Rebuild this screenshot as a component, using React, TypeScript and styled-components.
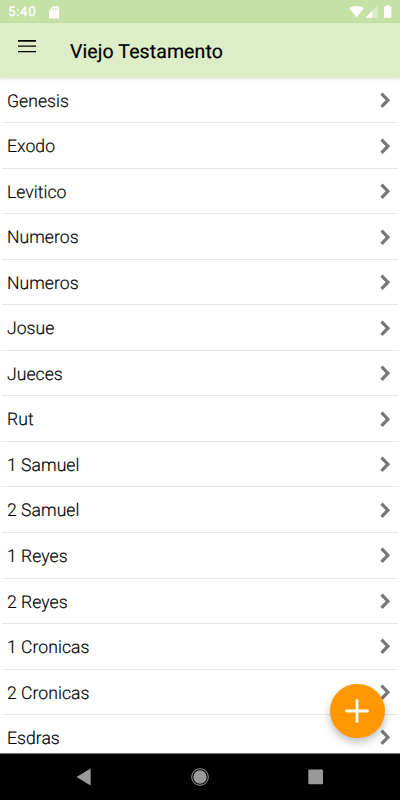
import React from "react";
import styled, { createGlobalStyle } from "styled-components";

const GlobalStyle = createGlobalStyle`
  * { box-sizing: border-box; }
  body {
    margin: 0;
    background: #fff;
    font-family: Roboto, sans-serif;
    text-rendering: geometricPrecision;
  }
`;

const Screen = styled.div`
  position: relative;
  display: flex;
  flex-direction: column;
  width: 400px;
  height: 800px;
  overflow: hidden;
  background: #fff;
`;

const StatusBar = styled.div`
  flex: none;
  display: flex;
  align-items: center;
  height: 23px;
  padding: 1px 7px 0 8px;
  background: #c5e1a5;
  color: #fff;
`;

const Clock = styled.span`
  width: 41px;
  padding-top: 2px;
  font-size: 13.3px;
  font-weight: 400;
  -webkit-text-stroke: 0.3px #fff;
  letter-spacing: 0.7px;
  line-height: 22px;
`;

const StatusIcons = styled.div`
  display: flex;
  align-items: center;
  margin-left: auto;
`;

const AppBar = styled.header`
  flex: none;
  z-index: 1;
  display: flex;
  height: 55px;
  padding-left: 18px;
  background: #dcedc8;
  box-shadow: 0 1px 3px rgba(0, 0, 0, 0.12);
`;

const MenuButton = styled.button`
  width: 52px;
  height: 46px;
  padding: 0;
  border: 0;
  background: none;
  text-align: left;
  svg { display: block; }
`;

const Title = styled.h1`
  margin: 0;
  font-size: 19.5px;
  font-weight: 400;
  -webkit-text-stroke: 0.2px #000;
  letter-spacing: 0.1px;
  line-height: 57px;
  color: #000;
`;

const BookList = styled.ul`
  flex: 1;
  min-height: 0;
  margin: -0.3px 0 0;
  padding: 0 2px;
  overflow: hidden;
  list-style: none;
`;

const BookRow = styled.li`
  display: flex;
  align-items: center;
  justify-content: space-between;
  height: 45.54px;
  padding: 0 7px 0 5px;
  border-bottom: 1px solid #e6e6e6;
  font-size: 17.6px;
  font-weight: 300;
  -webkit-text-stroke: 0.18px #000;
  letter-spacing: 0.03px;
  color: #000;
  svg { display: block; }
`;

const BookName = styled.span`
  padding-top: 3.4px;
`;

const AddButton = styled.button`
  position: absolute;
  left: 330px;
  top: 683.5px;
  display: flex;
  align-items: center;
  justify-content: center;
  width: 54.5px;
  height: 54.5px;
  padding: 0;
  border: 0;
  border-radius: 50%;
  background: #ff9800;
  box-shadow: 0 4px 8px rgba(0, 0, 0, 0.27);
`;

const NavBar = styled.nav`
  flex: none;
  display: flex;
  align-items: center;
  justify-content: space-between;
  height: 47px;
  padding: 0 76px 0 76px;
  border-top: 1px solid #777;
  background: #000;
  svg { display: block; }
`;

const books = [
  "Genesis", "Exodo", "Levitico", "Numeros", "Numeros", "Josue", "Jueces", "Rut",
  "1 Samuel", "2 Samuel", "1 Reyes", "2 Reyes", "1 Cronicas", "2 Cronicas", "Esdras",
];

const Chevron = () => (
  <svg width="12" height="18" viewBox="0 0 12 18" fill="none" stroke="#777" strokeWidth="3.2">
    <path d="M2.500 2.600 8.900 9.200l-6.400 6.600" />
  </svg>
);

export default function App() {
  return (
    <>
      <GlobalStyle />
      <Screen>
        <StatusBar>
          <Clock>5:40</Clock>
          <svg width="11" height="13" viewBox="0 0 11 13">
            <path fill="#fff" fillRule="evenodd" d="M4 .3h5a1.200 1.200 0 0 1 1.200 1.200v9.800A1.200 1.200 0 0 1 9 12.500H1.200A1.200 1.200 0 0 1 0 11.300V4.300zM4 2v2.200h1V2zm1.800 0v2.200h1V2zm1.800 0v2.200h1V2z" />
          </svg>
          <StatusIcons>
            <svg width="44" height="14" viewBox="0 0 44 14" fill="#fff">
              <path d="M.2 3.300C4.200.2 10.800.2 14.800 3.300L7.500 12.500z" />
              <path opacity=".4" d="M28.500.8v12H16.500z" />
              <path d="M23.200 6.100v6.700h-6.700z" />
              <path d="M37.200.2h3.100v1.200h2v11.300h-7.300V1.400h2.200z" />
            </svg>
          </StatusIcons>
        </StatusBar>
        <AppBar>
          <MenuButton aria-label="Menu">
            <svg width="18" height="14" viewBox="0 0 18 14">
              <path fill="#000" d="M0 1h18v1.800H0zM0 6.500h18v1.300H0zM0 12h18v1.300H0z" />
            </svg>
          </MenuButton>
          <Title>Viejo Testamento</Title>
        </AppBar>
        <BookList>
          {books.map((book, index) => (
            <BookRow key={index}>
              <BookName>{book}</BookName>
              <Chevron />
            </BookRow>
          ))}
        </BookList>
        <NavBar>
          <svg width="15" height="18" viewBox="0 0 15 18">
            <path fill="#999" d="M.5 9 13.700 1q1-.5 1 .5v15q0 1-1 .5z" />
          </svg>
          <svg width="18" height="18" viewBox="0 0 18 18">
            <circle cx="9" cy="9" r="6.700" fill="#999" />
            <circle cx="9" cy="9" r="8.300" fill="none" stroke="#999" />
          </svg>
          <svg width="16" height="16" viewBox="0 0 16 16">
            <rect x=".3" y=".5" width="14.700" height="14.700" rx="1" fill="#999" />
          </svg>
        </NavBar>
        <AddButton aria-label="Add">
          <svg width="26" height="26" viewBox="0 0 26 26" stroke="#fff" strokeWidth="2.800" strokeLinecap="round">
            <path d="M13 2.500v21M2.500 13h21" />
          </svg>
        </AddButton>
      </Screen>
    </>
  );
}
